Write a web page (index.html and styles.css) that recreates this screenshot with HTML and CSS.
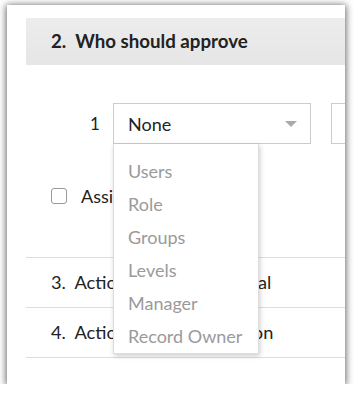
FILE: index.html
```html
<!DOCTYPE html>
<html>
<head>
<meta charset="utf-8">
<link rel="stylesheet" href="styles.css">
</head>
<body>
<div class="card">
  <div class="section-head">2.&nbsp; Who should approve</div>
  <div class="approver-row">
    <span class="num">1</span>
    <div class="select-wrap">
      <div class="select">
        <span>None</span>
        <span class="caret"></span>
      </div>
      <ul class="menu">
        <li>Users</li>
        <li>Role</li>
        <li>Groups</li>
        <li>Levels</li>
        <li>Manager</li>
        <li>Record Owner</li>
      </ul>
    </div>
    <div class="select second"></div>
  </div>
  <label class="check-row">
    <span class="checkbox"></span>
    <span>Assign to all approvers</span>
  </label>
  <div class="section-row">3.&nbsp; Actions on final approval</div>
  <div class="section-row">4.&nbsp; Actions on final rejection</div>
</div>
</body>
</html>
```

FILE: styles.css
```css
html, body {
  margin: 0;
  padding: 0;
  background: #ffffff;
}
body {
  font-family: Lato, "Open Sans", sans-serif;
  color: #222;
}
.card {
  margin: 5px 0 0 7px;
  width: 338px;
  height: 379px;
  background: #fff;
  box-shadow: 0 1px 7px 1px rgba(0, 0, 0, 0.6);
  overflow: hidden;
  padding-top: 13px;
  box-sizing: border-box;
}
.section-head {
  margin-left: 19px;
  height: 47px;
  line-height: 47px;
  padding-left: 25px;
  background: linear-gradient(#ececec, #e6e6e6);
  font-size: 18.7px;
  font-weight: bold;
  white-space: nowrap;
}
.approver-row {
  display: flex;
  align-items: center;
  margin-top: 38px;
  padding-left: 83px;
  white-space: nowrap;
}
.approver-row > * {
  flex-shrink: 0;
}
.num {
  font-size: 17px;
  width: 23px;
}
.select-wrap {
  position: relative;
}
.select {
  box-sizing: border-box;
  width: 198px;
  height: 41px;
  border: 1px solid #ccc;
  display: flex;
  align-items: center;
  justify-content: space-between;
  padding: 0 13px 0 14px;
  font-size: 18px;
  color: #222;
  background: #fff;
}
.caret {
  width: 0;
  height: 0;
  border-left: 6px solid transparent;
  border-right: 6px solid transparent;
  border-top: 6px solid #aaa;
}
.select.second {
  margin-left: 20px;
  width: 60px;
}
.menu {
  position: absolute;
  top: 100%;
  left: 0;
  width: 146px;
  box-sizing: border-box;
  margin: 0;
  padding: 11px 0 0;
  list-style: none;
  background: #fff;
  border: 1px solid #ddd;
  border-top: none;
  box-shadow: 1px 2px 5px rgba(0, 0, 0, 0.2);
  z-index: 2;
}
.menu li {
  height: 33px;
  line-height: 33px;
  padding-left: 14px;
  font-size: 18px;
  color: #9a9a9a;
  white-space: nowrap;
}
.check-row {
  display: flex;
  align-items: center;
  gap: 14px;
  margin-top: 41px;
  padding-left: 44px;
  font-size: 18px;
  white-space: nowrap;
}
.checkbox {
  flex-shrink: 0;
  width: 14px;
  height: 14px;
  border: 1px solid #999;
  border-radius: 3px;
  background: #fff;
}
.section-row {
  margin-left: 19px;
  height: 49px;
  line-height: 49px;
  padding-left: 25px;
  border-top: 1px solid #ddd;
  font-size: 18.2px;
  white-space: nowrap;
}
.check-row + .section-row {
  margin-top: 50px;
}
.section-row:last-child {
  border-bottom: 1px solid #ddd;
}
```
